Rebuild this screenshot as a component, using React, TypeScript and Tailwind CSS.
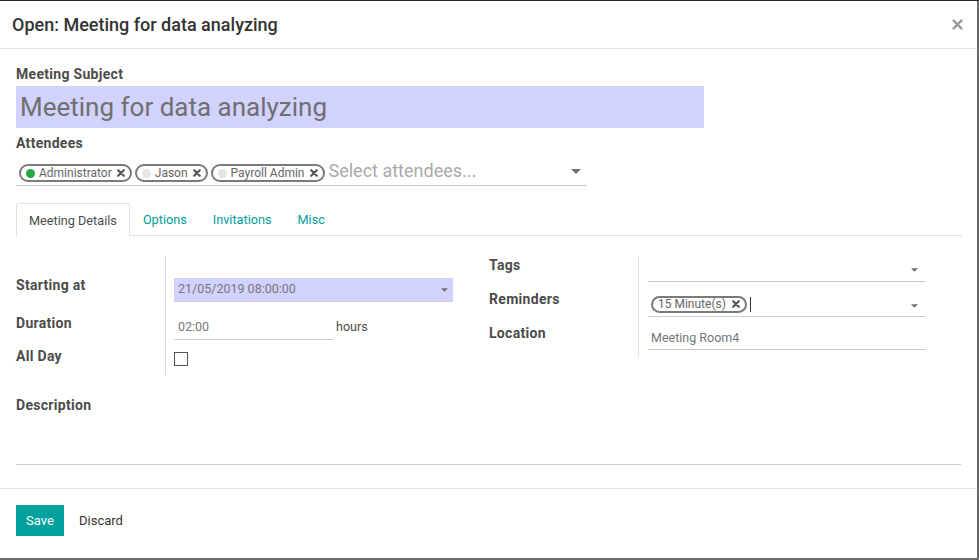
const TABS = ["Meeting Details", "Options", "Invitations", "Misc"];

const ATTENDEES = [
  { name: "Administrator", dot: "bg-[#28a745]" },
  { name: "Jason", dot: "bg-[#e6e6e6]" },
  { name: "Payroll Admin", dot: "bg-[#e6e6e6]" },
];

const Cross = ({ size = 8, className = "", stroke = 2.6 }: { size?: number; className?: string; stroke?: number }) => (
  <svg width={size} height={size} viewBox="0 0 10 10" className={className}>
    <path d="M1.5 1.5 L8.5 8.5 M8.5 1.5 L1.5 8.5" stroke="currentColor" strokeWidth={stroke} strokeLinecap="round" />
  </svg>
);

const Caret = ({ w = 7, h = 4 }: { w?: number; h?: number }) => (
  <svg width={w} height={h} viewBox="0 0 10 5" className="text-[#6f6f6f]">
    <path d="M0 0 L10 0 L5 5 Z" fill="currentColor" />
  </svg>
);

const Pill = ({ label, dot }: { label: string; dot?: string }) => (
  <span className="flex h-[18px] items-center gap-[4px] rounded-full border-2 border-[#7a7a7a] px-[5px] text-[12px] leading-none text-[#666]">
    {dot && <span className={`h-[9px] w-[9px] rounded-full ${dot}`} />}
    <span>{label}</span>
    <Cross className="ml-[1px] text-[#555]" />
  </span>
);

const Label = ({ children, className = "" }: { children: React.ReactNode; className?: string }) => (
  <div className={`text-[14px] font-bold leading-[18px] tracking-[0.3px] text-[#4c4c4c] ${className}`}>
    {children}
  </div>
);

export default function App() {
  return (
    <div className="h-[560px] w-[979px] overflow-hidden bg-[#6a6a6a] font-['Roboto',sans-serif]">
      <div className="h-px w-full bg-[#2e2331]" />
      <div className="flex h-[557px] w-[977px] flex-col bg-white">
        {/* header */}
        <div className="flex h-[48px] items-center justify-between border-b border-[#e5e5e5] pl-3 pr-[14px]">
          <h4 className="text-[18px] font-medium text-[#333]">Open: Meeting for data analyzing</h4>
          <Cross size={11} stroke={2.2} className="text-[#999]" />
        </div>

        {/* body */}
        <div className="pl-4 pr-[15px] pt-4">
          <Label>Meeting Subject</Label>
          <div className="mt-[3px] flex h-[42px] w-[688px] items-center bg-[#d2d2ff] pl-1 text-[26px] text-[#6f6f6f]">
            Meeting for data analyzing
          </div>

          <Label className="mt-[6px]">Attendees</Label>
          <div className="flex h-[34px] w-[571px] items-end border-b border-[#ccc] pb-[3px] pl-[3px] pr-[6px]">
            <div className="flex items-center gap-[3px]">
              {ATTENDEES.map((a) => (
                <Pill key={a.name} label={a.name} dot={a.dot} />
              ))}
            </div>
            <span className="ml-[4px] text-[18px] leading-[22px] text-[#aaa]">Select attendees...</span>
            <span className="mb-[8px] ml-auto">
              <Caret w={10} h={5} />
            </span>
          </div>

          {/* tabs */}
          <div className="mt-[17px] flex h-[33px] border-b border-[#dee2e6]">
            {TABS.map((t, i) => (
              <div
                key={t}
                className={
                  i === 0
                    ? "-mb-px flex items-center rounded-t-[3px] border border-b-0 border-[#dee2e6] bg-white px-[12px] pt-px text-[12.7px] text-[#4c4c4c]"
                    : "flex items-center px-[13px] pt-px text-[12.7px] text-[#00a09d]"
                }
              >
                {t}
              </div>
            ))}
          </div>

          {/* groups */}
          <div className="mt-5 flex">
            <div className="w-[473px]">
              <div className="flex h-[50px]">
                <Label className="w-[149px] pt-[20px]">Starting at</Label>
                <div className="border-l border-[#ddd] pl-[8px]">
                  <div className="mt-[22px] flex h-[24px] w-[279px] items-center justify-between border-b border-[#ccc] bg-[#d2d2ff] pl-1 pr-[5px] text-[12.5px] text-[#777]">
                    21/05/2019 08:00:00
                    <Caret />
                  </div>
                </div>
              </div>
              <div className="flex h-[37px]">
                <Label className="w-[149px] pt-[8px]">Duration</Label>
                <div className="flex items-start border-l border-[#ddd] pl-[8px]">
                  <div className="mt-[10px] flex h-[24px] w-[159px] items-center border-b border-[#ccc] pl-1 text-[12.5px] text-[#777]">
                    02:00
                  </div>
                  <span className="ml-[3px] mt-[12px] text-[12.5px] text-[#4c4c4c]">hours</span>
                </div>
              </div>
              <div className="flex h-[32px]">
                <Label className="w-[149px] pt-[4px]">All Day</Label>
                <div className="border-l border-[#ddd] pl-[8px]">
                  <div className="mt-[9px] h-[14px] w-[14px] border border-[#555] bg-white" />
                </div>
              </div>
            </div>

            <div className="w-[473px]">
              <div className="flex h-[34px]">
                <Label className="w-[149px]">Tags</Label>
                <div className="border-l border-[#ddd] pl-[9px]">
                  <div className="flex h-[26px] w-[277px] items-center justify-end border-b border-[#ccc] pr-[7px] pt-[3px]">
                    <Caret />
                  </div>
                </div>
              </div>
              <div className="flex h-[34px]">
                <Label className="w-[149px]">Reminders</Label>
                <div className="border-l border-[#ddd] pl-[9px]">
                  <div className="mt-[2px] flex h-[25px] w-[277px] items-center border-b border-[#ccc] pl-[3px] pr-[7px]">
                    <span className="flex h-[17px] items-center gap-[6px] rounded-full border-2 border-[#7a7a7a] px-[5px] text-[12px] text-[#666]">
                      15 Minute(s)
                      <Cross className="text-[#555]" />
                    </span>
                    <span className="ml-[3px] h-[15px] w-px bg-[#333]" />
                    <span className="ml-auto mt-[3px]">
                      <Caret />
                    </span>
                  </div>
                </div>
              </div>
              <div className="flex h-[33px]">
                <Label className="w-[149px]">Location</Label>
                <div className="border-l border-[#ddd] pl-[9px]">
                  <div className="mt-px flex h-[25px] w-[278px] items-center border-b border-[#ccc] pl-[3px] pt-[2px] text-[12.5px] text-[#777]">
                    Meeting Room4
                  </div>
                </div>
              </div>
            </div>
          </div>

          <Label className="mt-[21px]">Description</Label>
          <div className="h-[51px] w-[945px] border-b border-[#ccc]" />
        </div>

        {/* footer */}
        <div className="mt-[23px] flex items-center gap-[15px] border-t border-[#e5e5e5] px-4 pt-4">
          <button className="h-[31px] w-[48px] bg-[#00a09d] text-[13px] text-white">Save</button>
          <span className="text-[13px] text-[#333]">Discard</span>
        </div>
      </div>
    </div>
  );
}
